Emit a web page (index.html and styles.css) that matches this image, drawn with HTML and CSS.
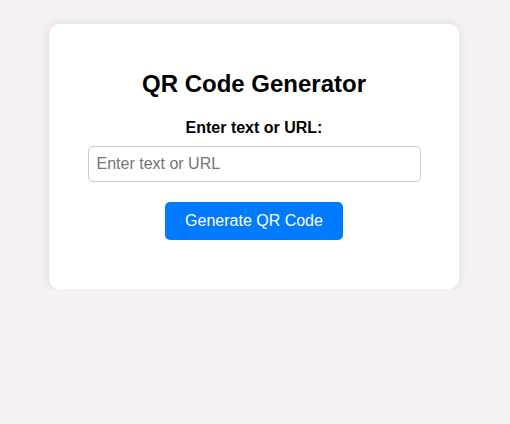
FILE: index.html
```html
<!DOCTYPE html>
<html lang="en">
<head>
<meta charset="utf-8">
<title>QR Code Generator</title>
<link rel="stylesheet" href="styles.css">
</head>
<body>
<div class="page">
  <div class="card">
    <h2 class="title">QR Code Generator</h2>
    <label class="label" for="qr-text">Enter text or URL:</label>
    <input class="input" id="qr-text" type="text" placeholder="Enter text or URL">
    <button class="btn" type="button">Generate QR Code</button>
  </div>
</div>
</body>
</html>
```

FILE: styles.css
```css
html, body {
  margin: 0;
  background: #f5f1f4;
  font-family: "Liberation Sans", Arial, sans-serif;
}
.page {
  display: flex;
  justify-content: center;
  padding: 24px 2px 0 0;
}
.card {
  box-sizing: border-box;
  width: 410px;
  height: 265px;
  background: #fff;
  border-radius: 10px;
  box-shadow: 0 0 10px rgba(0, 0, 0, 0.1);
  padding-top: 46px;
  display: flex;
  flex-direction: column;
  align-items: center;
}
.title {
  margin: 0;
  font-size: 24px;
  line-height: 28px;
  font-weight: bold;
  color: #000;
}
.label {
  margin-top: 21px;
  font-size: 16px;
  line-height: 18px;
  font-weight: bold;
  color: #000;
}
.input {
  box-sizing: border-box;
  margin-top: 9px;
  width: 333px;
  height: 36px;
  padding: 0 8px;
  border: 1px solid #ccc;
  border-radius: 5px;
  font-family: inherit;
  font-size: 16px;
  color: #333;
  outline: none;
}
.input::placeholder {
  color: #757575;
}
.btn {
  box-sizing: border-box;
  margin-top: 20px;
  width: 178px;
  height: 38px;
  padding: 0;
  border: none;
  border-radius: 5px;
  background: #007bff;
  color: #fff;
  font-family: inherit;
  font-size: 16px;
  cursor: pointer;
}
```
